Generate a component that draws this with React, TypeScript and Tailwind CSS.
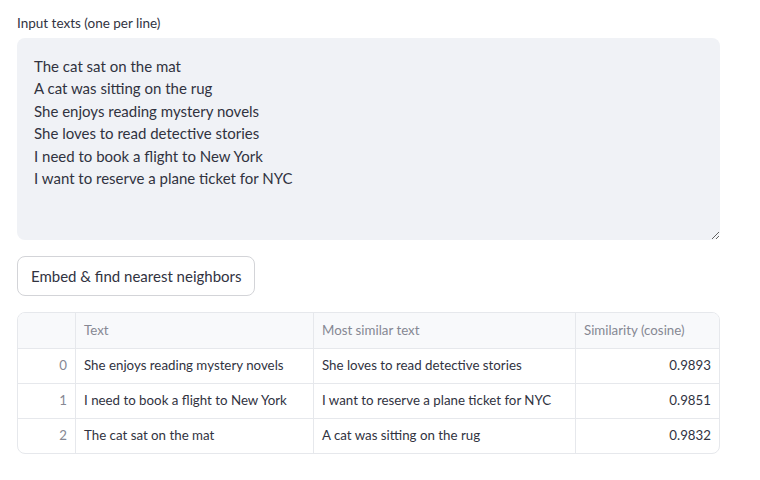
import React from 'react';

const inputText = `The cat sat on the mat
A cat was sitting on the rug
She enjoys reading mystery novels
She loves to read detective stories
I need to book a flight to New York
I want to reserve a plane ticket for NYC`;

const rows = [
  { idx: 0, text: 'She enjoys reading mystery novels', similar: 'She loves to read detective stories', score: '0.9893' },
  { idx: 1, text: 'I need to book a flight to New York', similar: 'I want to reserve a plane ticket for NYC', score: '0.9851' },
  { idx: 2, text: 'The cat sat on the mat', similar: 'A cat was sitting on the rug', score: '0.9832' },
];

const cols = 'grid grid-cols-[58px_238px_262px_1fr]';

export default function App() {
  return (
    <div className="w-[760px] h-[480px] bg-white text-[#31333f] font-['Lato','Noto_Sans',sans-serif]">
      <div className="pl-[17px] pr-[40px] pt-[14px]">
        <label className="block text-[13.5px] leading-[18px] mb-[6px]">Input texts (one per line)</label>
        <textarea
          defaultValue={inputText}
          className="block w-[703px] h-[202px] bg-[#f0f2f6] rounded-lg px-[17px] pt-[17px] text-[15px] leading-[22.4px] outline-none resize-y"
        />

        <button className="mt-[16px] h-[40px] px-[13px] border border-[#d3d4d8] rounded-lg bg-white text-[15px]">
          Embed &amp; find nearest neighbors
        </button>

        <div className="mt-[16px] w-[703px] border border-[#e6e8ec] rounded-lg overflow-hidden text-[13.3px]">
          <div className={`${cols} h-[35px] bg-[#f8f9fb] text-[#868893] items-stretch`}>
            <div className="border-r border-[#e6e8ec]" />
            <div className="border-r border-[#e6e8ec] flex items-center px-[8px] pt-[1px]">Text</div>
            <div className="border-r border-[#e6e8ec] flex items-center px-[8px] pt-[1px]">Most similar text</div>
            <div className="flex items-center px-[8px] pt-[1px]">Similarity (cosine)</div>
          </div>
          {rows.map((r) => (
            <div key={r.idx} className={`${cols} h-[35px] border-t border-[#e6e8ec]`}>
              <div className="border-r border-[#e6e8ec] flex items-center justify-end px-[8px] text-[#868893]">{r.idx}</div>
              <div className="border-r border-[#e6e8ec] flex items-center px-[8px]">{r.text}</div>
              <div className="border-r border-[#e6e8ec] flex items-center px-[8px]">{r.similar}</div>
              <div className="flex items-center justify-end px-[8px]">{r.score}</div>
            </div>
          ))}
        </div>
      </div>
    </div>
  );
}
